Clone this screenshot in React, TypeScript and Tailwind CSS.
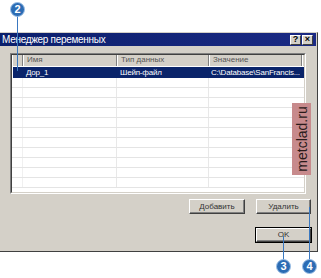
import React from 'react';

// callout badge drawn over the screenshot
const Badge: React.FC<{ n: string; className: string }> = ({ n, className }) => (
  <div
    className={`absolute w-[15px] h-[15px] rounded-full bg-[#2c6cb4] border border-[#9cc0e6] flex items-center justify-center text-white text-[11px] font-bold leading-none ${className}`}
  >
    {n}
  </div>
);

const Btn: React.FC<{ label: string; className?: string }> = ({ label, className = '' }) => (
  <div
    className={`h-[15px] flex items-center justify-center bg-[#d4d0c8] border-t border-l border-t-white border-l-white border-r border-b border-r-[#404040] border-b-[#404040] shadow-[inset_-1px_-1px_0_#808080] text-[8px] text-[#333] ${className}`}
  >
    {label}
  </div>
);

const cols = [
  { w: 'w-[11px]', label: '' },
  { w: 'w-[94px]', label: 'Имя' },
  { w: 'w-[92px]', label: 'Тип данных' },
  { w: 'w-[93px]', label: 'Значение' },
];

export default function App() {
  const emptyRows = Array.from({ length: 11 });

  return (
    <div className="relative w-[321px] h-[278px] bg-white overflow-hidden" style={{ fontFamily: '"Liberation Sans", Arial, sans-serif' }}>
      {/* window */}
      <div className="mt-[32px] w-[318px] h-[220px] bg-[#d4d0c8] border-t border-t-[#d4d0c8] border-r border-b border-r-[#404040] border-b-[#404040] flex flex-col">
        {/* title bar */}
        <div className="h-[13px] mr-[1px] bg-gradient-to-r from-[#0a1f6c] to-[#1b2a84] flex items-center pl-[2px] pr-[3px]">
          <span className="text-white text-[10px] leading-none tracking-[-0.3px]">Менеджер переменных</span>
          <div className="ml-auto flex gap-[1px]">
            <div className="w-[11px] h-[10px] bg-[#d4d0c8] border-t border-l border-white border-r border-b border-r-[#404040] border-b-[#404040] flex items-center justify-center text-[9px] font-bold leading-none text-black">?</div>
            <div className="w-[11px] h-[10px] bg-[#d4d0c8] border-t border-l border-white border-r border-b border-r-[#404040] border-b-[#404040] flex items-center justify-center text-[9px] font-bold leading-none text-black">×</div>
          </div>
        </div>

        {/* list view */}
        <div className="ml-[10px] mt-[7px] w-[296px] h-[141px] border-t border-l border-t-[#808080] border-l-[#808080] border-r border-b border-r-white border-b-white">
          <div className="w-full h-full border-t border-l border-t-[#404040] border-l-[#404040] border-r border-b border-r-[#d4d0c8] border-b-[#d4d0c8] bg-white overflow-hidden">
            <div className="flex h-[11px] bg-[#d4d0c8]">
              {cols.map((c, i) => (
                <div
                  key={i}
                  className={`${c.w} shrink-0 border-l border-l-white border-r border-r-[#808080] text-[8px] leading-[10px] text-[#555] pl-[3px]`}
                >
                  {c.label}
                </div>
              ))}
              <div className="flex-1 border-l border-l-white" />
            </div>
            <div className="flex h-[11px] mt-[1px] bg-[#0a246a] text-white text-[8px] leading-[11px] ml-[1px] tracking-[-0.2px]">
              <div className="w-[10px] shrink-0" />
              <div className="w-[94px] shrink-0 pl-[3px]">Дор_1</div>
              <div className="w-[92px] shrink-0 pl-[3px]">Шейп-файл</div>
              <div className="w-[93px] shrink-0 pl-[2px] whitespace-nowrap">C:\Database\SanFrancis...</div>
            </div>
            {emptyRows.map((_, i) => (
              <div key={i} className="flex h-[10px] border-b border-b-[#e4e4e4]">
                <div className="w-[11px] shrink-0 border-r border-r-[#f0f0f0]" />
                <div className="w-[94px] shrink-0 border-r border-r-[#e8e8e8]" />
                <div className="w-[92px] shrink-0 border-r border-r-[#e8e8e8]" />
                <div className="w-[93px] shrink-0" />
              </div>
            ))}
          </div>
        </div>

        {/* buttons */}
        <div className="flex mt-[5px] ml-[189px] gap-[11px]">
          <Btn label="Добавить" className="w-[56px]" />
          <Btn label="Удалить" className="w-[55px]" />
        </div>
        <div className="mt-[13px] ml-[255px] w-[57px] h-[16px] border border-black">
          <Btn label="OK" className="w-full h-full" />
        </div>
      </div>

      {/* watermark */}
      <div className="absolute left-[292px] top-[103px] w-[19px] h-[72px] bg-[#c78a8c] flex items-center justify-center">
        <span className="-rotate-90 whitespace-nowrap text-[14px] text-[#2a1a1a] leading-none">metclad.ru</span>
      </div>

      {/* callout lines */}
      <div className="absolute left-[17px] top-[16px] w-[1px] h-[55px] bg-[#3a78c0]" />
      <div className="absolute left-[283px] top-[236px] w-[1px] h-[24px] bg-[#3a78c0]" />
      <div className="absolute left-[309px] top-[207px] w-[1px] h-[53px] bg-[#3a78c0]" />

      <Badge n="2" className="left-[10px] top-[2px]" />
      <Badge n="3" className="left-[276px] top-[259px]" />
      <Badge n="4" className="left-[302px] top-[259px]" />
    </div>
  );
}
